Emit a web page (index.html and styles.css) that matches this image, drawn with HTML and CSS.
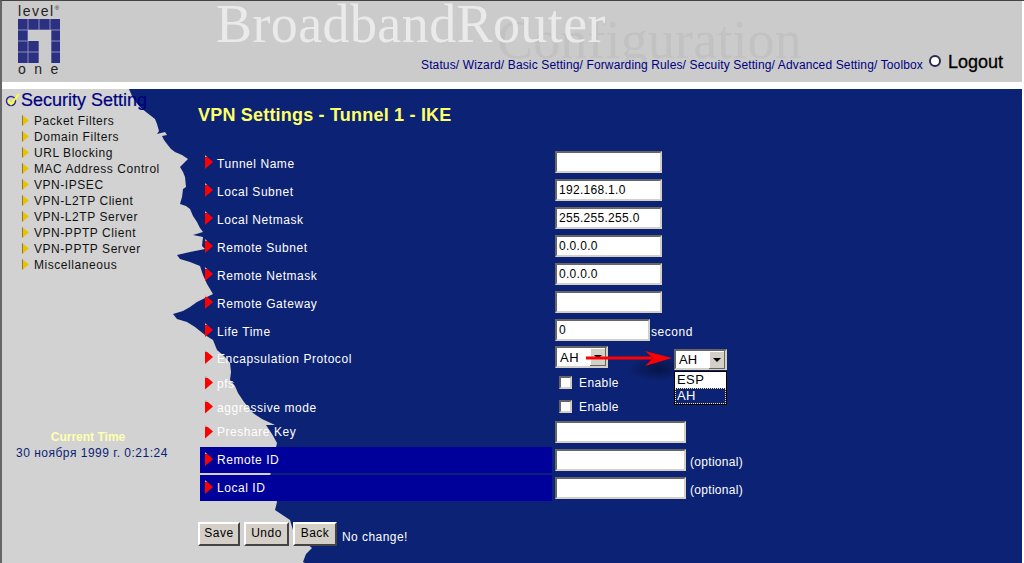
FILE: index.html
```html
<!DOCTYPE html>
<html lang="en">
<head>
    <meta charset="UTF-8">
    <title>VPN Settings - Tunnel 1 - IKE</title>
    <link rel="stylesheet" href="styles.css">
</head>
<body>
    <header class="top-bar">
        <div class="logo">
            <div class="logo-level">level<sup>&reg;</sup></div>
            <svg class="logo-mark" width="42" height="44" viewBox="0 0 42 44">
                <rect width="42" height="44" fill="#2b3080"/>
                <path d="M0 11H42M0 22H10M0 33H21M33 22H42M33 33H42M10 0V44M21 0V11M21 22V44M32 0V11M33 11V44" stroke="#8c8ebc" stroke-width="1" fill="none"/>
                <path d="M10 11H33V44H21V22H10Z" fill="#cbcbcb"/>
            </svg>
            <div class="logo-one">one</div>
        </div>
        <div class="brand">
            <span class="brand-sub">Configuration</span>
            <span class="brand-title">BroadbandRouter</span>
        </div>
        <nav class="top-nav">
            <a href="#">Status/</a> <a href="#">Wizard/</a> <a href="#">Basic Setting/</a> <a href="#">Forwarding Rules/</a> <a href="#">Secuity Setting/</a> <a href="#">Advanced Setting/</a> <a href="#">Toolbox</a>
        </nav>
        <div class="logout">
            <span class="logout-dot"></span>
            <a href="#">Logout</a>
        </div>
    </header>

    <div class="main">
        <!-- torn paper edge between the menu and the form -->
        <svg class="torn-edge" width="320" height="474" viewBox="0 89 320 474">
            <path fill="#d2d2d2" d="M0 89H129L132 96L135 101L140 107L146 112L155 119L157 124L159 131L157 134L165 132L167 135L162 136L164 140L167 144L171 149L175 152L182 155L188 159L184 163L180 167L183 172L185 177L186 187L183 189L182 197L180 204L186 206L190 209L193 216L197 222L200 228L203 232L193 235L203 237L202 246L205 249L190 252L177 255L180 259L190 262L200 266L203 275L207 284L213 294L205 298L197 302L190 307L183 311L173 314L177 319L187 322L195 327L200 331L205 335L213 340L217 350L224 356L230 363L231 372L230 380L235 386L238 393L244 402L253 413L262 419L275 425L266 425L272 434L277 443L275 452L272 465L270 477L274 490L277 502L275 510L284 516L290 520L293 530L300 538L312 548L306 554L303 562L305 563H0Z"/>
        </svg>

        <aside class="sidebar">
            <h2 class="menu-title">
                <svg class="menu-check" width="16" height="16" viewBox="0 0 16 16">
                    <circle cx="6" cy="9" r="4.5" fill="#d2d2d2" stroke="#2a2a8a" stroke-width="1.5"/>
                    <path d="M3 8L6 12L14 2" stroke="#ffff33" stroke-width="2" fill="none"/>
                </svg>Security Setting</h2>
            <ul class="menu">
                <li>Packet Filters</li>
                <li>Domain Filters</li>
                <li>URL Blocking</li>
                <li>MAC Address Control</li>
                <li>VPN-IPSEC</li>
                <li>VPN-L2TP Client</li>
                <li>VPN-L2TP Server</li>
                <li>VPN-PPTP Client</li>
                <li>VPN-PPTP Server</li>
                <li>Miscellaneous</li>
            </ul>
            <div class="clock">
                <div class="clock-label">Current Time</div>
                <div class="clock-value">30 ноября 1999 г. 0:21:24</div>
            </div>
        </aside>

        <section class="content">
            <h1 class="page-title">VPN Settings - Tunnel 1 - IKE</h1>
            <form class="settings">
                <div class="row"><label class="field-label">Tunnel Name</label><input class="box" type="text"></div>
                <div class="row"><label class="field-label">Local Subnet</label><input class="box" type="text" value="192.168.1.0"></div>
                <div class="row"><label class="field-label">Local Netmask</label><input class="box" type="text" value="255.255.255.0"></div>
                <div class="row"><label class="field-label">Remote Subnet</label><input class="box" type="text" value="0.0.0.0"></div>
                <div class="row"><label class="field-label">Remote Netmask</label><input class="box" type="text" value="0.0.0.0"></div>
                <div class="row"><label class="field-label">Remote Gateway</label><input class="box" type="text"></div>
                <div class="row"><label class="field-label">Life Time</label><input class="box box-life" type="text" value="0"><span class="note">second</span></div>
                <div class="row row-select"><label class="field-label">Encapsulation Protocol</label>
                    <div class="select"><span class="select-value">AH</span><span class="select-btn"></span></div>
                </div>
                <div class="row row-pfs"><label class="field-label">pfs</label><label class="check"><span class="check-box"></span>Enable</label></div>
                <div class="row row-aggressive"><label class="field-label">aggressive mode</label><label class="check"><span class="check-box"></span>Enable</label></div>
                <div class="row row-key"><label class="field-label">Preshare Key</label><input class="box box-long" type="text"></div>
                <div class="row row-blue"><label class="field-label">Remote ID</label><input class="box box-long" type="text"><span class="note note-opt">(optional)</span></div>
                <div class="row row-blue"><label class="field-label">Local ID</label><input class="box box-long" type="text"><span class="note note-opt">(optional)</span></div>
            </form>
            <div class="actions">
                <button class="btn btn-save" type="button">Save</button>
                <button class="btn btn-undo" type="button">Undo</button>
                <button class="btn btn-back" type="button">Back</button>
                <span class="status">No change!</span>
            </div>
        </section>

        <!-- annotation pasted over the screenshot -->
        <svg class="arrow" width="90" height="34" viewBox="0 0 90 34">
            <defs>
                <radialGradient id="arrow-shadow">
                    <stop offset="0" stop-color="#061546"/>
                    <stop offset="1" stop-color="#0c2274"/>
                </radialGradient>
            </defs>
            <ellipse cx="72" cy="20" rx="30" ry="12" fill="url(#arrow-shadow)"/>
            <path d="M0 9H66" stroke="#f00" stroke-width="3"/>
            <path d="M59 2L86 9L59 17L67 9Z" fill="#f00"/>
        </svg>
        <div class="callout">
            <div class="select select-open"><span class="select-value">AH</span><span class="select-btn"></span></div>
            <div class="dropdown">
                <div class="dropdown-item">ESP</div>
                <div class="dropdown-item dropdown-item-on">AH</div>
            </div>
        </div>
    </div>
</body>
</html>
```

FILE: styles.css
```css
html, body {
    margin: 0;
    padding: 0;
    height: 100%;
}

body {
    font-family: "Liberation Sans", Arial, sans-serif;
    font-size: 12px;
    background-color: #fff;
    border-top: 1px solid #444;
    border-left: 2px solid #666;
    box-sizing: border-box;
    overflow: hidden;
}

a {
    color: inherit;
    text-decoration: none;
}

.top-bar {
    position: relative;
    height: 81px;
    background-color: #cbcbcb;
    margin-right: 2px;
}

.logo {
    position: absolute;
    left: 16px;
    top: 3px;
    width: 46px;
    color: #222;
}

.logo-level {
    font-size: 14px;
    letter-spacing: 1.6px;
    line-height: 14px;
    white-space: nowrap;
}

.logo-level sup {
    font-size: 6px;
    line-height: 0;
    letter-spacing: 0;
}

.logo-mark {
    display: block;
    margin: 1px 0 0;
}

.logo-one {
    font-size: 14px;
    letter-spacing: 8.5px;
    line-height: 12px;
    white-space: nowrap;
}

.brand-title {
    position: absolute;
    left: 214px;
    top: 1px;
    font-family: "Liberation Serif", serif;
    font-size: 54px;
    line-height: 44px;
    letter-spacing: 0.4px;
    color: #eaeaea;
    white-space: nowrap;
}

.brand-sub {
    position: absolute;
    left: 495px;
    top: 17px;
    font-family: "Liberation Serif", serif;
    font-size: 54px;
    line-height: 44px;
    letter-spacing: 0.15px;
    color: #c2c2c2;
    white-space: nowrap;
}

.top-nav {
    position: absolute;
    left: 419px;
    top: 57px;
    color: #000080;
    letter-spacing: 0.13px;
    white-space: nowrap;
}

.logout {
    position: absolute;
    left: 927px;
    top: 50px;
    display: flex;
    align-items: center;
    gap: 7px;
    font-size: 18px;
    line-height: 22px;
    color: #000;
    -webkit-text-stroke: 0.3px #000;
}

.logout-dot {
    width: 8px;
    height: 8px;
    margin-top: -2px;
    border-radius: 50%;
    background-color: #fff;
    border: 2px solid #2a2a50;
}

.main {
    position: relative;
    margin-top: 7px;
    height: 474px;
    margin-right: 2px;
    background-color: #0c2274;
    display: flex;
    overflow: hidden;
}

.torn-edge {
    position: absolute;
    left: -2px;
    top: 0;
}

.sidebar {
    position: relative;
    width: 196px;
    flex: none;
}

.menu-title {
    margin: 0;
    padding: 1px 0 0 3px;
    display: flex;
    align-items: center;
    font-size: 18px;
    line-height: 21px;
    font-weight: normal;
    color: #000080;
    white-space: nowrap;
    -webkit-text-stroke: 0.2px #000080;
}

.menu-check {
    flex: none;
    margin-top: -2px;
}

.menu {
    list-style: none;
    margin: 2px 0 0;
    padding: 0 0 0 32px;
    color: #111;
    letter-spacing: 0.55px;
}

.menu li {
    position: relative;
    height: 16px;
    line-height: 16px;
    white-space: nowrap;
}

.menu li::before {
    content: "";
    position: absolute;
    left: -12px;
    top: 2px;
    width: 7px;
    height: 11px;
    background: linear-gradient(to right, #8a7a30 1px, #f0c000 1px);
    clip-path: polygon(0 0, 100% 50%, 0 100%);
}

.clock {
    position: absolute;
    left: 0;
    top: 341px;
    width: 172px;
}

.clock-label {
    color: #ffffb0;
    font-weight: bold;
    line-height: 15px;
    text-align: center;
}

.clock-value {
    color: #0c2274;
    line-height: 17px;
    padding-left: 14px;
    letter-spacing: 0.5px;
    white-space: nowrap;
}

.content {
    position: relative;
    flex: 1;
}

.page-title {
    margin: 0;
    padding-top: 16px;
    height: 43px;
    font-size: 18px;
    line-height: 20px;
    letter-spacing: 0.2px;
    color: #ffff66;
}

.settings {
    margin-left: 2px;
}

.row {
    display: flex;
    align-items: center;
    height: 28px;
    color: #fff;
    letter-spacing: 0.55px;
}

.row-select { height: 26px; }
.row-pfs { height: 25px; }
.row-aggressive { height: 23px; }
.row-key { height: 27px; margin-bottom: 2px; }

.row-blue {
    background-color: #00009a;
    width: 352px;
    height: 26px;
    margin-bottom: 2px;
}

.field-label {
    position: relative;
    flex: none;
    width: 338px;
    padding: 4px 0 0 17px;
    white-space: nowrap;
}

.row-pfs .field-label,
.row-aggressive .field-label {
    padding-top: 2px;
}

.row-key .field-label {
    padding-top: 0;
}

.row-blue .field-label {
    padding-top: 2px;
    margin-top: -2px;
}

.field-label::before {
    content: "";
    position: absolute;
    left: 5px;
    top: calc(50% - 7px);
    width: 8px;
    height: 14px;
    background: linear-gradient(to bottom, #b0b0b0 2px, #f00 2px);
    clip-path: polygon(0 0, 100% 50%, 0 100%);
}

.box {
    width: 107px;
    height: 22px;
    box-sizing: border-box;
    padding: 1px 2px;
    border: 2px solid;
    border-color: #666 #d4d0c8 #d4d0c8 #666;
    background-color: #fff;
    font-family: inherit;
    font-size: 12px;
    letter-spacing: 0.3px;
    flex: none;
}

.box-life { width: 95px; }
.box-long { width: 131px; }

.note {
    margin-left: 1px;
    padding-top: 3px;
    white-space: nowrap;
}

.note-opt {
    margin-left: 4px;
    padding-top: 4px;
    letter-spacing: 0.3px;
}

.select {
    display: flex;
    width: 53px;
    height: 22px;
    box-sizing: border-box;
    border: 2px solid;
    border-color: #666 #d4d0c8 #d4d0c8 #666;
    background-color: #fff;
    color: #000;
    align-items: center;
    font-size: 13px;
}

.select-value {
    flex: 1;
    padding-left: 3px;
}

.select-btn {
    position: relative;
    width: 16px;
    height: 18px;
    background-color: #d4d0c8;
    box-shadow: inset -1px -1px #666, inset 1px 1px #fff;
}

.select-btn::after {
    content: "";
    position: absolute;
    left: 4px;
    top: 7px;
    border-top: 4px solid #000;
    border-left: 4px solid transparent;
    border-right: 4px solid transparent;
}

.check {
    display: flex;
    align-items: center;
    margin-left: 4px;
    letter-spacing: 0.4px;
}

.check-box {
    width: 13px;
    height: 13px;
    box-sizing: border-box;
    border: 2px solid;
    border-color: #666 #d4d0c8 #d4d0c8 #666;
    background-color: #fff;
    margin-right: 7px;
}

.actions {
    display: flex;
    align-items: center;
    gap: 4px;
    margin-top: 21px;
}

.btn {
    height: 24px;
    padding: 0 0 2px;
    background-color: #d4d0c8;
    border: 2px solid;
    border-color: #fff #444 #444 #fff;
    font-family: inherit;
    font-size: 12px;
    letter-spacing: 0.5px;
    color: #000;
}

.btn-save { width: 42px; }
.btn-undo { width: 45px; }
.btn-back { width: 44px; }

.status {
    color: #fff;
    letter-spacing: 0.45px;
    margin: 6px 0 0 1px;
}

.callout {
    position: absolute;
    left: 672px;
    top: 260px;
    width: 53px;
}

.select-open {
    height: 21px;
    margin-bottom: 1px;
}

.dropdown {
    border: 1px solid #000;
    background-color: #fff;
    font-size: 13px;
    line-height: 16px;
    color: #000;
}

.dropdown-item {
    padding-left: 2px;
    letter-spacing: 0.4px;
}

.dropdown-item-on {
    background-color: #0c2274;
    color: #fff;
    outline: 1px dotted #ffe680;
    outline-offset: -1px;
}

.arrow {
    position: absolute;
    left: 584px;
    top: 260px;
}
```
